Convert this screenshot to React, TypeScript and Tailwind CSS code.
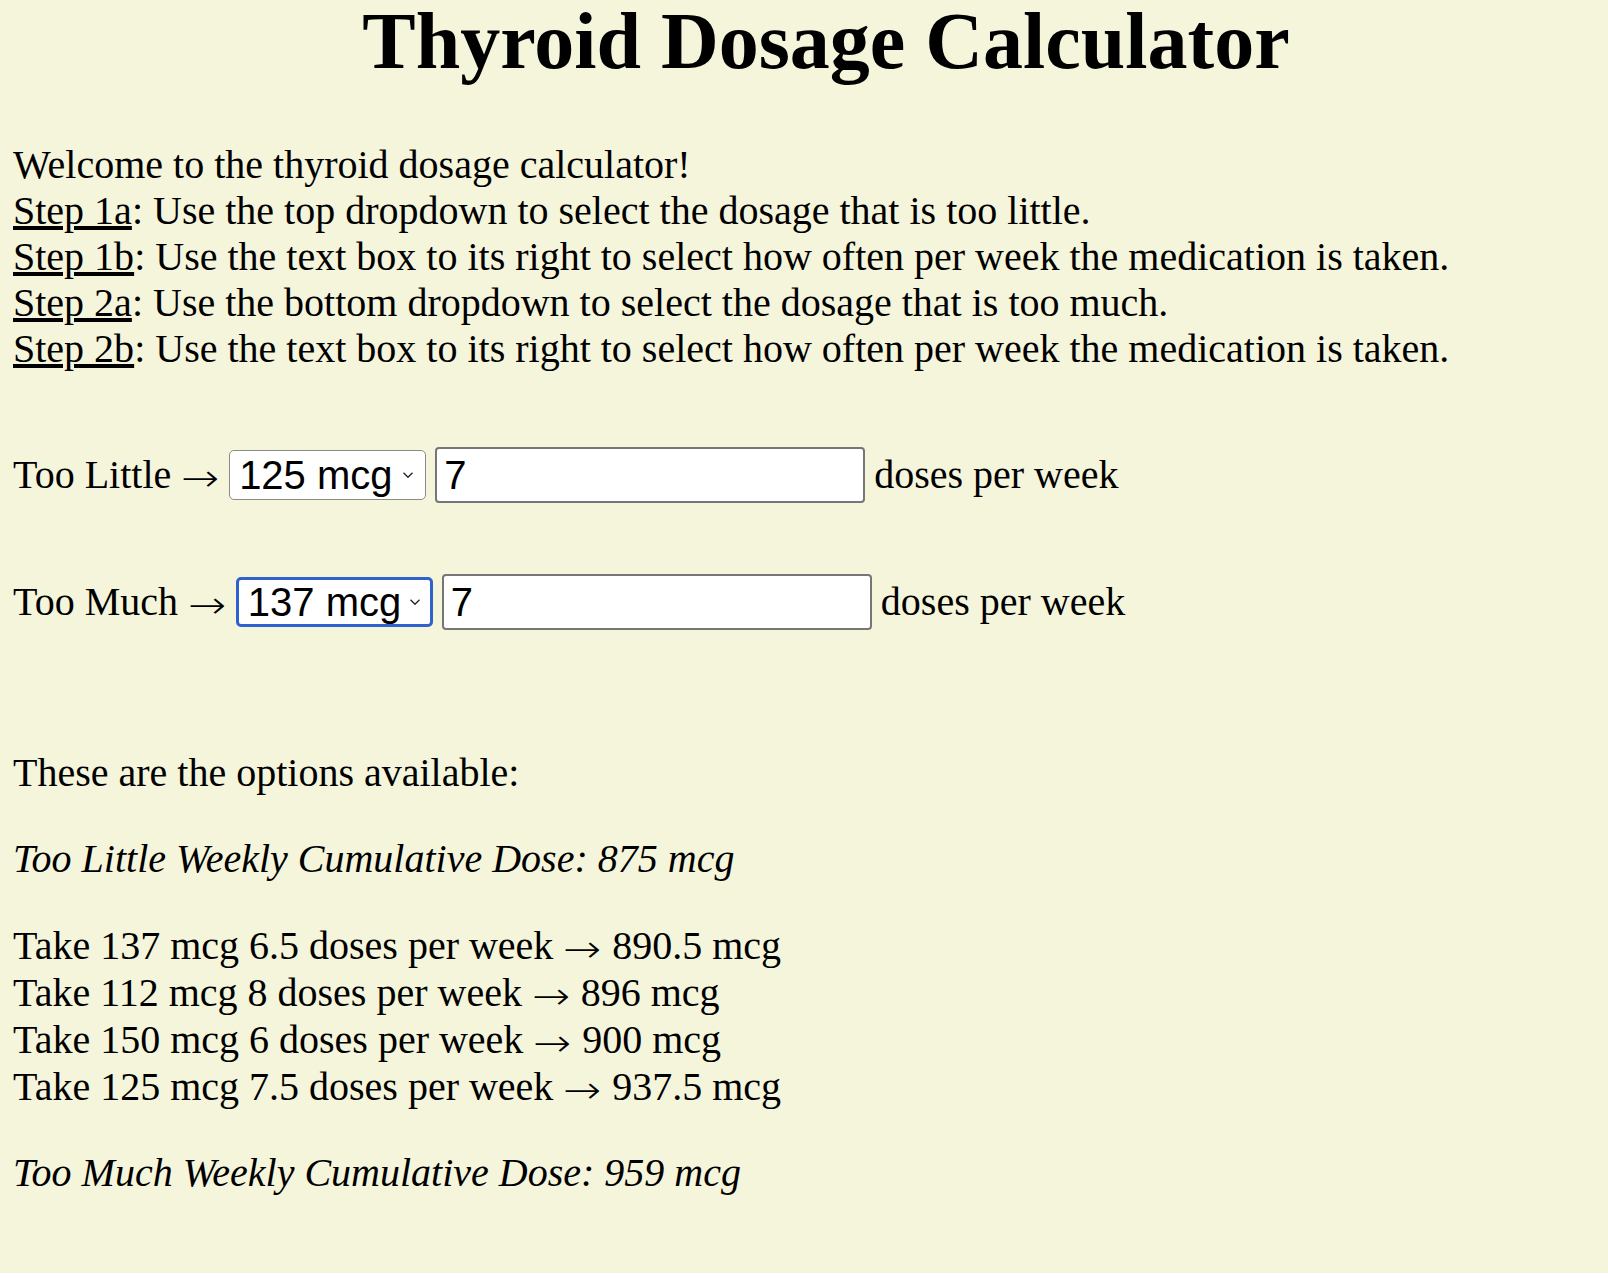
import React from "react";

const steps: [string, string][] = [
  ["Step 1a", "Use the top dropdown to select the dosage that is too little."],
  ["Step 1b", "Use the text box to its right to select how often per week the medication is taken."],
  ["Step 2a", "Use the bottom dropdown to select the dosage that is too much."],
  ["Step 2b", "Use the text box to its right to select how often per week the medication is taken."],
];

const doses = ["25", "50", "75", "88", "100", "112", "125", "137", "150", "175", "200"];

const choices: [string, string][] = [
  ["Take 137 mcg 6.5 doses per week", "890.5 mcg"],
  ["Take 112 mcg 8 doses per week", "896 mcg"],
  ["Take 150 mcg 6 doses per week", "900 mcg"],
  ["Take 125 mcg 7.5 doses per week", "937.5 mcg"],
];

// long thin arrow like the Times one
const Arrow = () => (
  <span className="inline-block origin-left scale-x-[1.2] mr-[7px] translate-y-[3px] font-['DejaVu_Sans',sans-serif] font-extralight text-[38px] leading-[0]">
    →
  </span>
);

type RowProps = {
  label: string;
  dose: string;
  focused?: boolean;
  className?: string;
};

const DoseRow: React.FC<RowProps> = ({ label, dose, focused, className }) => {
  return (
    <div className={`flex items-center gap-[9px] ${className ?? ""}`}>
      <span>
        {label} <Arrow />
      </span>
      <div className="relative">
        <select
          defaultValue={dose}
          className={`appearance-none w-[197px] h-[50px] bg-white rounded-[5px] pl-[9px] pr-[28px] font-['Liberation_Sans',Arial,sans-serif] text-[40px] leading-[44px] text-black outline-none ${
            focused ? "border-[3px] border-[#2f62cc]" : "border border-[#8b8b8b]"
          }`}
        >
          {doses.map((d) => (
            <option key={d} value={d}>
              {d} mcg
            </option>
          ))}
        </select>
        {/* chevron */}
        <svg
          className="pointer-events-none absolute right-[12px] top-1/2 -translate-y-1/2"
          width="12"
          height="7"
          viewBox="0 0 12 7"
        >
          <path d="M1.5 1.2l4.5 4.5 4.5-4.5" stroke="#2b2b2b" strokeWidth="1.4" fill="none" />
        </svg>
      </div>
      <input
        type="text"
        defaultValue="7"
        className="w-[430px] h-[56px] bg-white border-2 border-[#767676] rounded-[4px] px-[7px] font-['Liberation_Sans',Arial,sans-serif] text-[40px] text-black outline-none"
      />
      <span>doses per week</span>
    </div>
  );
};

const App: React.FC = () => {
  return (
    <div className="min-h-screen bg-[#f5f5dc] pl-[13px] pb-[40px] text-black font-['Liberation_Serif','Times_New_Roman',serif] text-[40px] leading-[46px]">
      {/* Title */}
      <h1 className="-mt-[5px] mb-[55px] pl-[31px] text-center text-[80px] leading-[92px] font-bold">
        Thyroid Dosage Calculator
      </h1>

      {/* Instructions */}
      <p>
        Welcome to the thyroid dosage calculator!
        {steps.map(([step, text]) => (
          <React.Fragment key={step}>
            <br />
            <span className="underline">{step}</span>: {text}
          </React.Fragment>
        ))}
      </p>

      <DoseRow label="Too Little" dose="125" className="mt-[75px]" />
      <DoseRow label="Too Much" dose="137" focused className="mt-[71px]" />

      {/* Results */}
      <p className="mt-[120px]">These are the options available:</p>
      <p className="mt-10 italic">Too Little Weekly Cumulative Dose: 875 mcg</p>
      <p className="mt-10 leading-[47px]">
        {choices.map(([take, total], i) => (
          <React.Fragment key={take}>
            {i > 0 && <br />}
            {take} <Arrow /> {total}
          </React.Fragment>
        ))}
      </p>
      <p className="mt-10 italic">Too Much Weekly Cumulative Dose: 959 mcg</p>
    </div>
  );
};

export default App;
